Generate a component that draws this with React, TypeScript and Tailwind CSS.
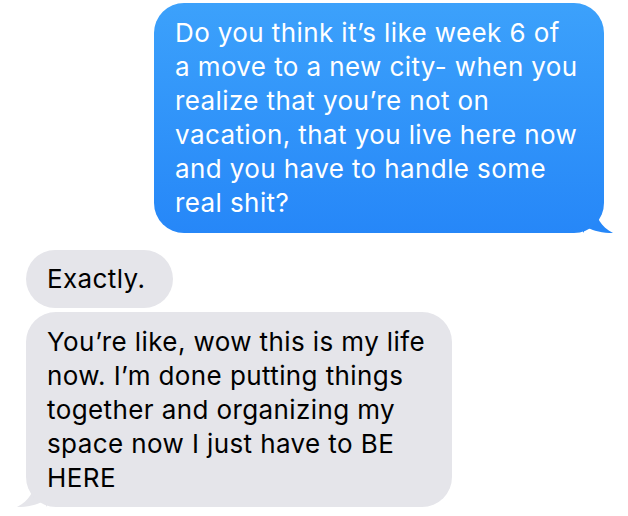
import React from "react";

const sent = [
  "Do you think it\u2019s like week 6 of",
  "a move to a new city- when you",
  "realize that you\u2019re not on",
  "vacation, that you live here now",
  "and you have to handle some",
  "real shit?",
];

const received = [
  "You\u2019re like, wow this is my life",
  "now. I\u2019m done putting things",
  "together and organizing my",
  "space now I just have to BE",
  "HERE",
];

function Lines({ lines }: { lines: string[] }) {
  return (
    <>
      {lines.map((l) => (
        <div key={l} className="whitespace-nowrap">
          {l}
        </div>
      ))}
    </>
  );
}

export default function App() {
  return (
    <div
      className="w-[628px] h-[516px] bg-white overflow-hidden flex flex-col pt-[3px] text-[26px] leading-[34px] tracking-[0.4px]"
      style={{ fontFamily: "Inter, 'Noto Sans', sans-serif" }}
    >
      {/* Outgoing */}
      <div className="flex justify-end pr-[24px]">
        <div className="relative">
          <div className="relative z-10 w-[450px] rounded-[30px] bg-gradient-to-b from-[#3ca1fb] to-[#2687f8] text-white pl-[21px] pt-[13px] pb-[13px]">
            <Lines lines={sent} />
          </div>
          <svg
            className="absolute right-[-9px] bottom-0 z-0"
            width="30"
            height="30"
            viewBox="0 0 30 30"
          >
            <path d="M0 0 H12 C12 14 18 24 30 30 C20 30 10 28 4 24 L0 30 Z" fill="#2687f8" />
          </svg>
        </div>
      </div>

      {/* Incoming */}
      <div className="flex flex-col items-start pl-[26px] mt-[17px] gap-[4px] text-black">
        <div className="rounded-[30px] bg-[#e5e5ea] pl-[21px] pr-[28px] py-[12px]">Exactly.</div>
        <div className="relative">
          <div className="relative z-10 w-[426px] rounded-[30px] bg-[#e5e5ea] pl-[21px] pt-[13px] pb-[12px]">
            <Lines lines={received} />
          </div>
          <svg
            className="absolute left-[-9px] bottom-0 z-0"
            width="30"
            height="30"
            viewBox="0 0 30 30"
          >
            <path d="M30 0 H18 C18 14 12 24 0 30 C10 30 20 28 26 24 L30 30 Z" fill="#e5e5ea" />
          </svg>
        </div>
      </div>
    </div>
  );
}
